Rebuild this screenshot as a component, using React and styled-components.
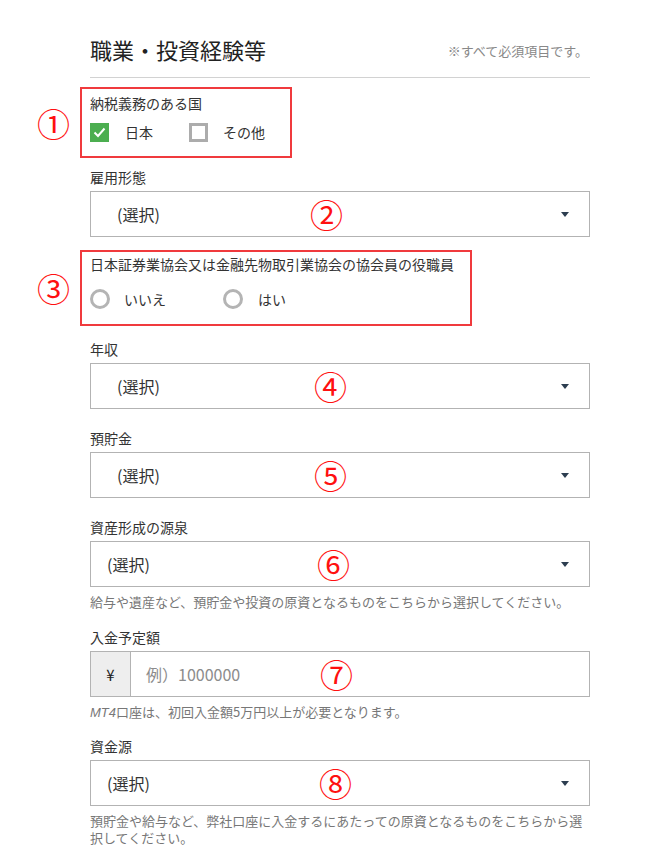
import React from "react";
import styled, { createGlobalStyle } from "styled-components";

const GlobalStyle = createGlobalStyle`
  body {
    margin: 0;
    background: #fff;
    font-family: "Noto Sans CJK JP", "Noto Sans", sans-serif;
    color: #333;
  }
`;

export default function App() {
  return (
    <>
      <GlobalStyle />
      <Page>
        <Header>
          <Title>職業・投資経験等</Title>
          <Note>※すべて必須項目です。</Note>
        </Header>

        <Marked $width={212} $top={9} $pad="4px 8px 14px">
          <Mark>①</Mark>
          <Label>納税義務のある国</Label>
          <Options $top={9}>
            <Option $gap={16} $space={36}>
              <CheckBox $checked>
                <svg width="13" height="11" viewBox="0 0 13 11">
                  <polyline
                    points="1.5,5.5 5,9 11.5,1.5"
                    fill="none"
                    stroke="#fff"
                    strokeWidth="2"
                  />
                </svg>
              </CheckBox>
              日本
            </Option>
            <Option $gap={15}>
              <CheckBox />
              その他
            </Option>
          </Options>
        </Marked>

        <Field $top={9}>
          <Label>雇用形態</Label>
          <Select $indent={26}>
            (選択)
            <Mark $inline $left={219}>②</Mark>
            <Caret />
          </Select>
        </Field>

        <Marked $width={392} $top={13} $pad="2px 8px 15px">
          <Mark>③</Mark>
          <Label>日本証券業協会又は金融先物取引業協会の協会員の役職員</Label>
          <Options $top={15}>
            <Option $gap={14} $space={57}>
              <Radio />
              いいえ
            </Option>
            <Option $gap={15}>
              <Radio />
              はい
            </Option>
          </Options>
        </Marked>

        <Field $top={13}>
          <Label>年収</Label>
          <Select $indent={26}>
            (選択)
            <Mark $inline $left={223}>④</Mark>
            <Caret />
          </Select>
        </Field>

        <Field>
          <Label>預貯金</Label>
          <Select $indent={26}>
            (選択)
            <Mark $inline $left={223}>⑤</Mark>
            <Caret />
          </Select>
        </Field>

        <Field>
          <Label>資産形成の源泉</Label>
          <Select $indent={16}>
            (選択)
            <Mark $inline $left={226}>⑥</Mark>
            <Caret />
          </Select>
          <Help>給与や遺産など、預貯金や投資の原資となるものをこちらから選択してください。</Help>
        </Field>

        <Field $top={17}>
          <Label>入金予定額</Label>
          <InputGroup>
            <Addon>¥</Addon>
            <Placeholder>例）1000000</Placeholder>
            <Mark $inline $left={229}>⑦</Mark>
          </InputGroup>
          <Help>
            <i>MT4</i>口座は、初回入金額5万円以上が必要となります。
          </Help>
        </Field>

        <Field $top={15}>
          <Label>資金源</Label>
          <Select $indent={16}>
            (選択)
            <Mark $inline $left={228}>⑧</Mark>
            <Caret />
          </Select>
          <Help>
            預貯金や給与など、弊社口座に入金するにあたっての原資となるものをこちらから選択してください。
          </Help>
        </Field>
      </Page>
    </>
  );
}

const Page = styled.div`
  width: 500px;
  padding: 34px 0 20px 90px;
`;

const Header = styled.div`
  display: flex;
  justify-content: space-between;
  align-items: center;
  padding-bottom: 13px;
  border-bottom: 1px solid #d2d2d2;
`;

const Title = styled.h1`
  margin: 0;
  font-size: 22px;
  line-height: 30px;
  font-weight: 400;
  color: #222;
`;

const Note = styled.span`
  font-size: 13px;
  line-height: 20px;
  color: #888;
  padding-top: 4px;
  margin-right: 2px;
`;

const Marked = styled.div`
  position: relative;
  box-sizing: border-box;
  width: ${(p) => p.$width}px;
  margin: ${(p) => p.$top}px 0 0 -10px;
  padding: ${(p) => p.$pad};
  border: 2px solid #f03a3d;
`;

/* red circled numbers are annotations laid over the form */
const Mark = styled.span`
  position: absolute;
  font-size: 33px;
  line-height: 34px;
  color: #ff1010;
  top: 50%;
  transform: translateY(-50%);
  left: ${(p) => (p.$inline ? `${p.$left}px` : "-45px")};
`;

const Field = styled.div`
  margin-top: ${(p) => p.$top ?? 19}px;
`;

const Label = styled.div`
  font-size: 14px;
  line-height: 20px;
  margin-bottom: 4px;
`;

const Options = styled.div`
  display: flex;
  align-items: center;
  margin-top: ${(p) => p.$top}px;
`;

const Option = styled.label`
  display: flex;
  align-items: center;
  gap: ${(p) => p.$gap}px;
  margin-right: ${(p) => p.$space ?? 0}px;
  font-size: 14px;
  line-height: 20px;
`;

const CheckBox = styled.span`
  box-sizing: border-box;
  width: 19px;
  height: 19px;
  display: flex;
  align-items: center;
  justify-content: center;
  background: ${(p) => (p.$checked ? "#4cae50" : "#fff")};
  border: ${(p) => (p.$checked ? "none" : "3px solid #acacac")};
`;

const Radio = styled.span`
  box-sizing: border-box;
  width: 20px;
  height: 20px;
  border-radius: 50%;
  border: 3px solid #b4b4b4;
`;

const Select = styled.div`
  position: relative;
  box-sizing: border-box;
  height: 46px;
  display: flex;
  align-items: center;
  padding: 0 20px 0 ${(p) => p.$indent}px;
  border: 1px solid #b3b3b3;
  font-size: 16px;
  color: #333;
`;

const Caret = styled.span`
  margin-left: auto;
  width: 0;
  height: 0;
  border-left: 4.5px solid transparent;
  border-right: 4.5px solid transparent;
  border-top: 5px solid #2c3e50;
`;

const InputGroup = styled.div`
  position: relative;
  box-sizing: border-box;
  height: 46px;
  display: flex;
  border: 1px solid #b3b3b3;
`;

const Addon = styled.span`
  width: 39px;
  display: flex;
  align-items: center;
  justify-content: center;
  background: #eee;
  border-right: 1px solid #b3b3b3;
  font-size: 15px;
  color: #222;
`;

const Placeholder = styled.span`
  display: flex;
  align-items: center;
  padding-left: 15px;
  font-size: 16px;
  color: #8c8c8c;
`;

const Help = styled.p`
  margin: 6px 0 0;
  font-size: 13px;
  line-height: 17px;
  color: #777;
  i {
    font-family: "Liberation Sans", sans-serif;
  }
`;
